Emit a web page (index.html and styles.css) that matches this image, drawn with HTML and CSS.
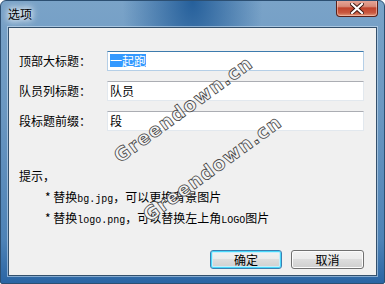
FILE: index.html
```html
<!DOCTYPE html>
<html lang="zh-CN">
<head>
    <meta charset="UTF-8">
    <title>选项</title>
    <link rel="stylesheet" href="styles.css">
</head>
<body>
    <div class="window">
        <div class="titlebar">
            <span class="title">选项</span>
            <div class="close">
                <svg width="14" height="11" viewBox="0 0 14 11">
                    <path d="M2 1 L12 10 M12 1 L2 10" stroke="#3a1510" stroke-width="4" stroke-linecap="square"/>
                    <path d="M2 1 L12 10 M12 1 L2 10" stroke="#fff" stroke-width="2.2" stroke-linecap="square"/>
                </svg>
            </div>
        </div>

        <div class="client">
            <!-- 表单 -->
            <div class="form">
                <label>顶部大标题：</label>
                <div class="field focused"><span class="sel">一起跑</span></div>
                <label>队员列标题：</label>
                <div class="field">队员</div>
                <label>段标题前缀：</label>
                <div class="field">段</div>
            </div>

            <!-- 提示 -->
            <div class="hint">
                <p>提示，</p>
                <ul>
                    <li>* 替换<span class="mono">bg.jpg</span>，可以更换背景图片</li>
                    <li>* 替换<span class="mono">logo.png</span>，可以替换左上角<span class="mono">LOGO</span>图片</li>
                </ul>
            </div>

            <div class="buttons">
                <button class="default">确定</button>
                <button>取消</button>
            </div>
        </div>

        <div class="watermark wm1">Greendown.cn</div>
        <div class="watermark wm2">Greendown.cn</div>
    </div>
</body>
</html>
```

FILE: styles.css
```css
body {
    margin: 0;
    font-family: "Noto Sans CJK SC", sans-serif;
    font-size: 12px;
    color: #000;
    background: #fff;
}

.window {
    position: relative;
    width: 385px;
    height: 284px;
    box-sizing: border-box;
    border: 1px solid #2c4f72;
    border-radius: 6px 6px 2px 2px;
    background:
        radial-gradient(ellipse 70px 120px at 50% 0, rgba(28, 88, 150, 0.9), rgba(28, 88, 150, 0) 100%),
        linear-gradient(to bottom, #7aa3c8 0, #6a97c1 40%, #4d82b6 85%, #2a65a4 100%);
    display: flex;
    flex-direction: column;
    overflow: hidden;
}

.titlebar {
    height: 26px;
    display: flex;
    align-items: flex-start;
    justify-content: space-between;
    padding-left: 7px;
}

.title {
    margin-top: 6px;
    line-height: 14px;
    text-shadow: 0 0 6px #fff, 0 0 8px #fff, 0 0 10px rgba(255,255,255,0.8);
}

.close {
    width: 42px;
    height: 17px;
    margin-right: 6px;
    margin-top: -1px;
    box-sizing: border-box;
    border: 1px solid #5a2018;
    border-top: none;
    border-radius: 0 0 4px 4px;
    background: linear-gradient(to bottom, #e8a99c 0, #d88a78 40%, #c0432c 50%, #c9583f 80%, #e29a7c 100%);
    box-shadow: inset 0 0 0 1px rgba(255, 210, 200, 0.5);
    display: flex;
    align-items: center;
    justify-content: center;
}

.client {
    flex: 1;
    margin: 0 7px 7px 7px;
    border: 1px solid #33506c;
    background: #f0f0f0;
    box-shadow: 0 0 0 1px rgba(220, 235, 250, 0.5);
    display: flex;
    flex-direction: column;
    padding: 23px 12px 0 10px;
}

.form {
    display: grid;
    grid-template-columns: 88px 257px;
    row-gap: 10px;
    align-items: center;
}

.form label {
    line-height: 20px;
}

.field {
    height: 20px;
    box-sizing: border-box;
    border: 1px solid #e2e8ee;
    border-top-color: #abadb3;
    background: #fff;
    padding-left: 2px;
    line-height: 18px;
}

.field.focused {
    border-color: #b5cfe7;
    border-top-color: #3d7bad;
    padding-top: 2px;
    line-height: 14px;
}

.sel {
    background: #3399ff;
    color: #fff;
    display: inline-block;
    height: 13px;
    line-height: 13px;
}

.hint {
    margin-top: 36px;
}

.hint p {
    margin: 0;
    line-height: 18px;
}

.hint ul {
    list-style: none;
    margin: 3px 0 0 0;
    padding-left: 26px;
}

.hint li {
    line-height: 18px;
}

.mono {
    font-family: "Liberation Mono", monospace;
    font-size: 10px;
}

.buttons {
    margin-top: 20px;
    display: flex;
    justify-content: flex-end;
    gap: 9px;
}

button {
    width: 73px;
    height: 19px;
    padding: 0;
    font-family: "Noto Sans CJK SC", sans-serif;
    font-size: 12px;
    line-height: 16px;
    color: #000;
    border: 1px solid #707070;
    border-radius: 3px;
    background: linear-gradient(to bottom, #f2f2f2 0, #ebebeb 50%, #dddddd 50%, #cfcfcf 100%);
    box-shadow: inset 0 0 0 1px #fcfcfc;
}

button.default {
    width: 72px;
    border-color: #3c7fb1;
    box-shadow: inset 0 0 0 1px #48d8fb, inset 0 0 0 2px #c6eefb;
}

.watermark {
    position: absolute;
    font-family: "DejaVu Sans", sans-serif;
    font-weight: bold;
    font-size: 19px;
    letter-spacing: 1px;
    color: #f4f4f4;
    -webkit-text-stroke: 0.8px #444;
    white-space: nowrap;
    transform: translate(-50%, -50%) rotate(-36deg);
}

.wm1 {
    left: 182px;
    top: 108px;
}

.wm2 {
    left: 211px;
    top: 167px;
}
```
